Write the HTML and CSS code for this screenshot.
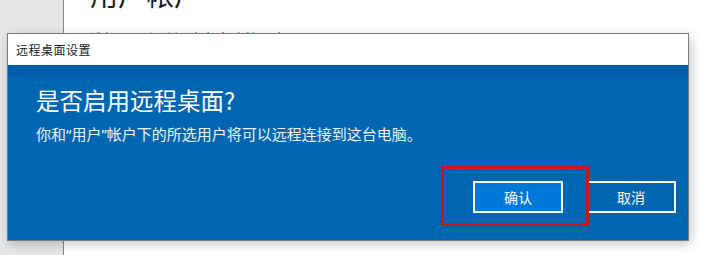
FILE: index.html
```html
<!DOCTYPE html>
<html lang="zh-CN">
<head>
<meta charset="utf-8">
<title>远程桌面设置</title>
<link rel="stylesheet" href="styles.css">
</head>
<body>
<div class="app">
  <aside class="nav"></aside>
  <main class="content">
    <h1 class="page-title">用户帐户</h1>
    <a class="link" href="#">选择可远程访问这台电脑的用户</a>
  </main>
</div>

<div class="dialog">
  <div class="titlebar">远程桌面设置</div>
  <div class="body">
    <h2 class="question">是否启用远程桌面?</h2>
    <p class="desc">你和“用户”帐户下的所选用户将可以远程连接到这台电脑。</p>
    <div class="actions">
      <button class="btn btn-primary">确认</button>
      <button class="btn">取消</button>
    </div>
  </div>
</div>

<div class="highlight"></div>
</body>
</html>
```

FILE: styles.css
```css
html, body {
  margin: 0;
  padding: 0;
  width: 707px;
  height: 255px;
  overflow: hidden;
  background: #ffffff;
  font-family: "Noto Sans CJK SC", "Noto Sans", sans-serif;
}

.app {
  display: flex;
  height: 255px;
}

.nav {
  width: 63px;
  background: #e6e6e6;
  border-right: 1px solid #8a8a8a;
  flex: none;
}

.content {
  flex: 1;
  padding-left: 26px;
}

.page-title {
  margin: -24px 0 0 0;
  font-size: 28px;
  font-weight: 400;
  line-height: 36px;
  color: #1a1a1a;
}

.link {
  display: block;
  margin-top: 15px;
  font-size: 14px;
  line-height: 23px;
  color: #0067b8;
  text-decoration: none;
}

.dialog {
  position: absolute;
  left: 7px;
  top: 33px;
  width: 680px;
  height: 206px;
  border: 1px solid #7c7c7c;
  background: #0063b1;
  box-shadow: 2px 3px 10px rgba(0, 0, 0, 0.22);
  display: flex;
  flex-direction: column;
}

.titlebar {
  height: 31px;
  background: #ffffff;
  color: #1a1a1a;
  font-size: 12px;
  letter-spacing: 0.5px;
  line-height: 31px;
  padding-left: 8px;
  flex: none;
}

.body {
  flex: 1;
  display: flex;
  flex-direction: column;
  padding: 0 12px 0 28px;
  background: linear-gradient(#005ea9 0, #005ea9 12px, #0066b2 12px, #0066b2 100%);
}

.question {
  margin: 17px 0 0 0;
  font-size: 23.5px;
  font-weight: 400;
  line-height: 36px;
  color: #ffffff;
}

.desc {
  margin: 6px 0 0 0;
  font-family: "Noto Sans", "Noto Sans CJK SC", sans-serif;
  font-size: 15px;
  line-height: 20px;
  color: #eef3f9;
}

.actions {
  display: flex;
  justify-content: flex-end;
  gap: 23px;
  margin-top: 37px;
}

.btn {
  width: 90px;
  height: 32px;
  box-sizing: border-box;
  border: 2px solid #ffffff;
  background: #0066b2;
  color: #ffffff;
  font-family: "Noto Sans CJK SC", "Noto Sans", sans-serif;
  font-size: 14px;
  padding: 0;
}

.btn-primary {
  background: #0078d7;
}

.highlight {
  position: absolute;
  left: 441px;
  top: 166px;
  width: 142px;
  height: 54px;
  border: 3px solid #d0121c;
}
```
